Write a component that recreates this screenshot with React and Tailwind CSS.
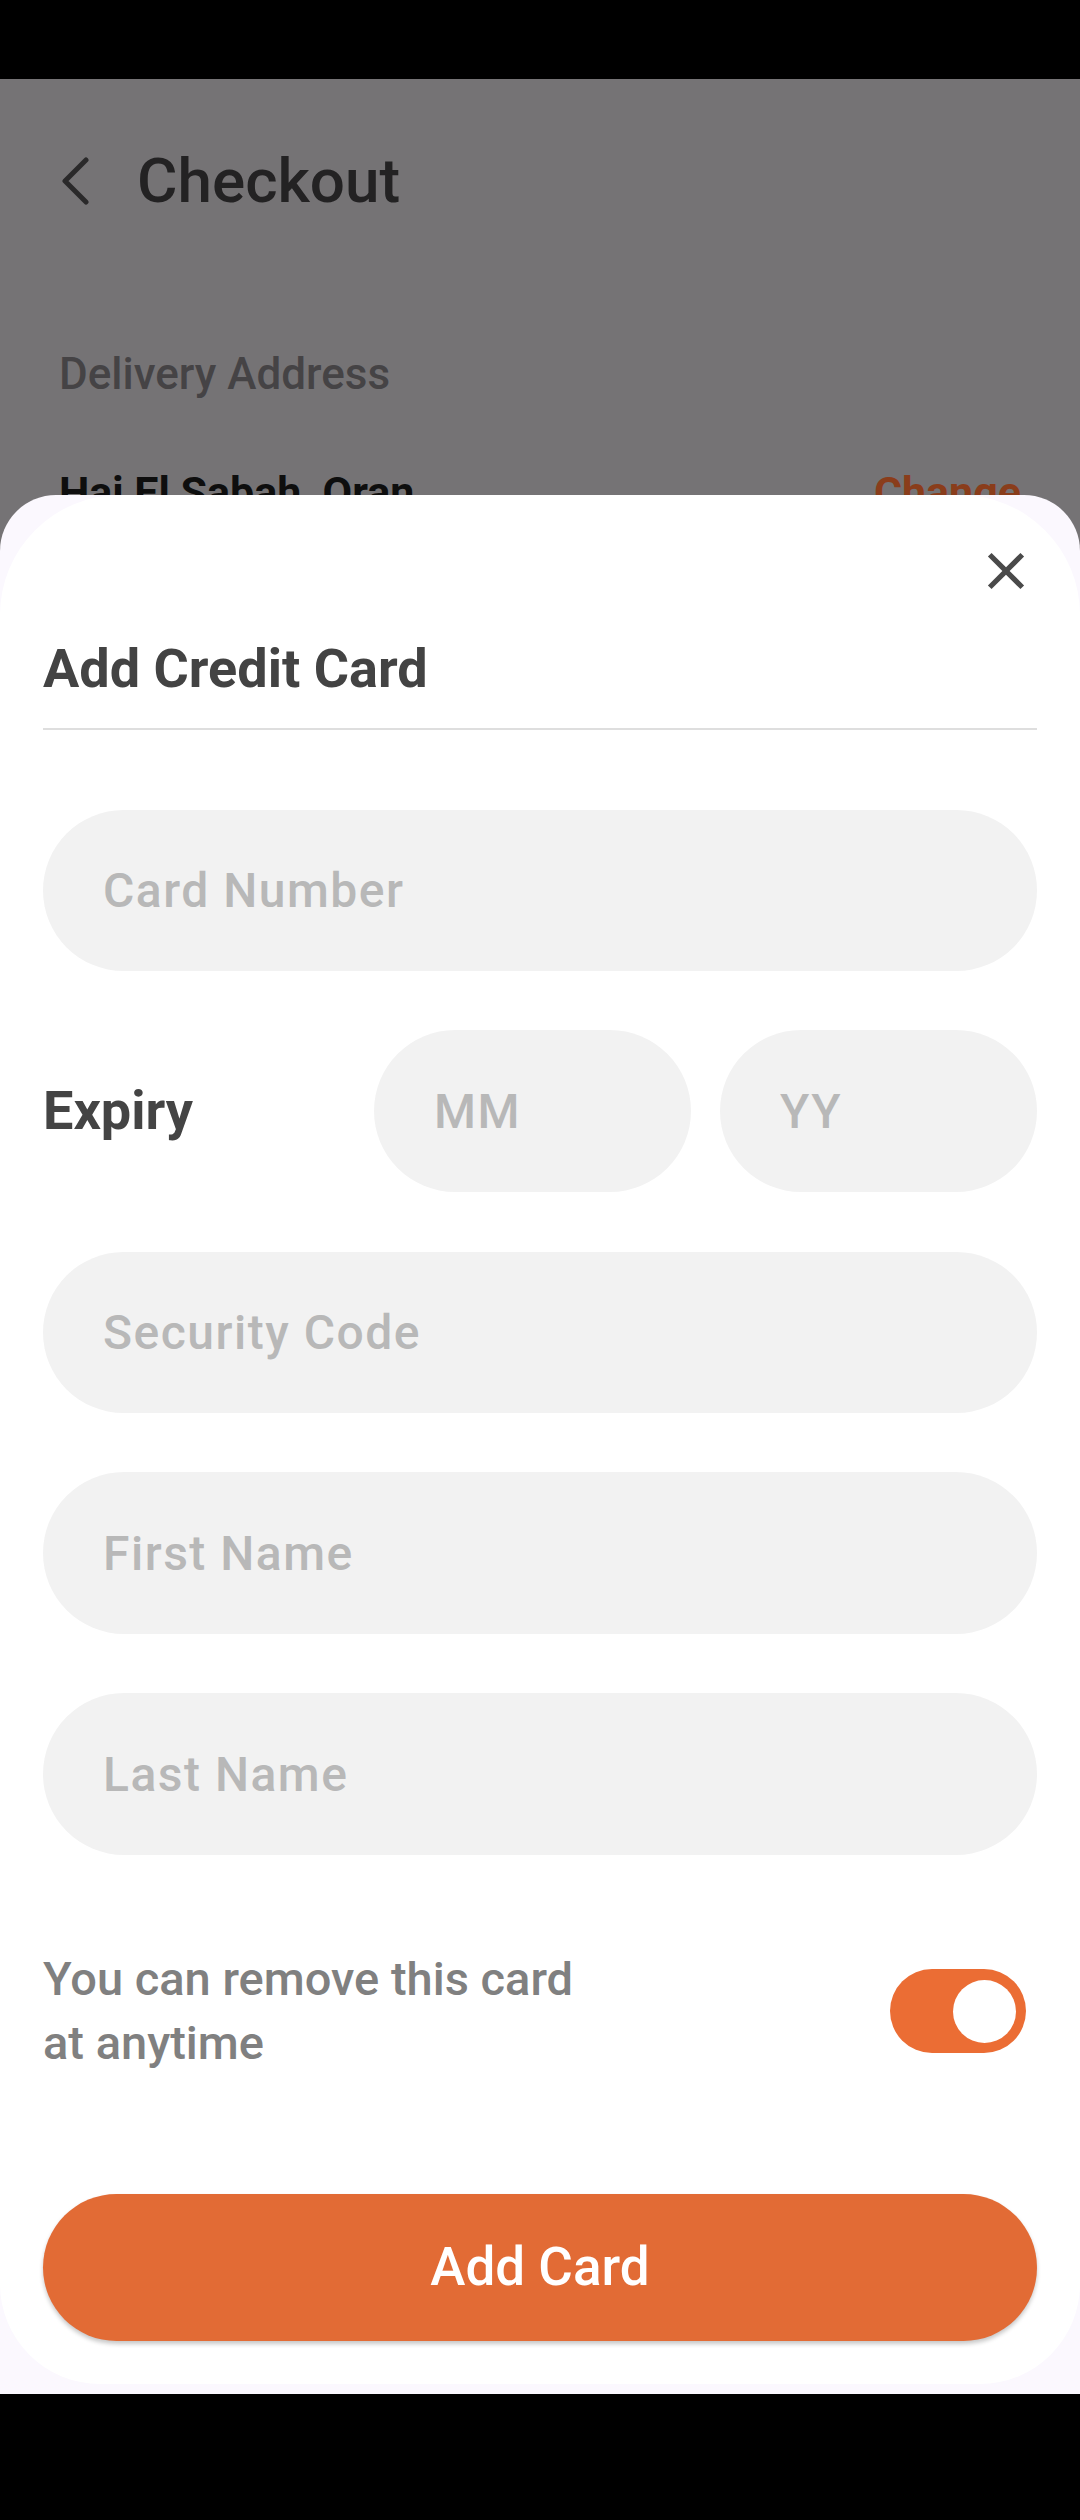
import React, { useState } from 'react';

// --- small pieces ---
const Field = ({ placeholder, className = '' }) => (
  <input
    type="text"
    placeholder={placeholder}
    className={`h-[161px] rounded-full bg-[#f2f2f2] pl-[60px] pr-[30px] text-[48px] font-medium tracking-[1.5px] text-[#424242] placeholder:text-[#b8b8b8] outline-none ${className}`}
  />
);

const Toggle = ({ on, onChange }) => (
  <button
    type="button"
    onClick={() => onChange(!on)}
    className={`flex h-[84px] w-[136px] shrink-0 items-center rounded-full px-[10px] ${on ? 'justify-end bg-[#eb6d34]' : 'justify-start bg-[#d6d6d6]'}`}
  >
    <span className="block h-[63px] w-[63px] rounded-full bg-white" />
  </button>
);

export default function App() {
  const [keepCard, setKeepCard] = useState(true);

  return (
    <div className="flex h-[2520px] w-[1080px] flex-col bg-black font-['Roboto',sans-serif]">
      {/* status bar */}
      <div className="h-[79px] shrink-0 bg-black" />

      {/* dimmed checkout page behind the sheet */}
      <div className="relative flex-1 overflow-hidden bg-[#757375]">
        <div className="flex items-center gap-[48px] pl-[61px] pt-[71px]">
          <svg width="28" height="48" viewBox="0 0 28 48" fill="none">
            <polyline points="25,3 4,24 25,45" stroke="#2a292a" strokeWidth="5" strokeLinecap="round" strokeLinejoin="round" />
          </svg>
          <h1 className="h-[62px] text-[62px] font-medium leading-none text-[#232223]">Checkout</h1>
        </div>

        <p className="mt-[140px] pl-[59px] text-[44px] font-medium leading-none text-[#454345]">Delivery Address</p>

        <div className="mt-[75px] flex justify-between px-[59px]">
          <span className="text-[43px] font-bold leading-none text-[#0e0e0e]">Haj El Sabah, Oran</span>
          <span className="text-[43px] font-bold leading-none text-[#8a3d1b]">Change</span>
        </div>

        {/* bottom sheet */}
        <div className="absolute inset-x-0 top-[416px] bottom-0 flex flex-col rounded-t-[56px] bg-[#fbf8fe] pb-[10px]">
          <div className="flex flex-1 flex-col rounded-t-[120px] rounded-b-[100px] bg-white px-[43px]">
            <div className="flex justify-end pt-[45px]">
              <button type="button" className="h-[62px] w-[62px]">
                <svg width="62" height="62" viewBox="0 0 24 24" fill="#4a4a4a">
                  <path d="M19 6.41L17.59 5 12 10.59 6.41 5 5 6.41 10.59 12 5 17.59 6.41 19 12 13.41 17.59 19 19 17.59 13.41 12z" />
                </svg>
              </button>
            </div>

            <h2 className="mt-[40px] text-[54px] font-bold leading-none text-[#434343]">Add Credit Card</h2>
            <div className="mt-[32px] h-[2px] bg-[#dedede]" />

            <Field placeholder="Card Number" className="mt-[80px] w-full" />

            <div className="mt-[59px] flex h-[162px] items-center gap-[29px]">
              <span className="flex-1 text-[54px] font-bold leading-none text-[#444444]">Expiry</span>
              <Field placeholder="MM" className="h-[162px] w-[317px]" />
              <Field placeholder="YY" className="h-[162px] w-[317px]" />
            </div>

            <Field placeholder="Security Code" className="mt-[60px] w-full" />
            <Field placeholder="First Name" className="mt-[59px] h-[162px] w-full" />
            <Field placeholder="Last Name" className="mt-[59px] h-[162px] w-full" />

            <div className="mt-[92px] flex items-center justify-between">
              <p className="text-[47px] font-medium leading-[64px] text-[#808080]">
                You can remove this card
                <br />
                at anytime
              </p>
              <div className="mr-[11px]">
                <Toggle on={keepCard} onChange={setKeepCard} />
              </div>
            </div>

            <button
              type="button"
              className="mt-[119px] h-[147px] w-full rounded-full bg-[#e26b35] text-[53px] font-medium text-white shadow-[0_3px_4px_rgba(0,0,0,0.22)]"
            >
              Add Card
            </button>
          </div>
        </div>
      </div>

      {/* navigation bar */}
      <div className="h-[126px] shrink-0 bg-black" />
    </div>
  );
}
